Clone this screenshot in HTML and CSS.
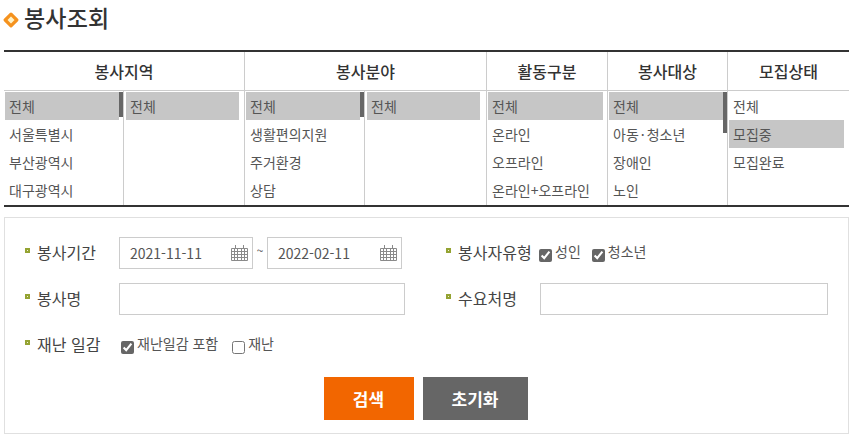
FILE: index.html
```html
<!DOCTYPE html>
<html lang="ko">
<head>
<meta charset="utf-8">
<title>봉사조회</title>
<link rel="stylesheet" href="styles.css">
</head>
<body>
<h1 class="title">
  <svg class="title-icon" width="16" height="16" viewBox="0 0 16 16"><path d="M8 2.2 13.8 8 8 13.8 2.2 8Z" fill="#fff3c8" stroke="#f5921e" stroke-width="3.2" stroke-linejoin="round"/></svg>
  <span>봉사조회</span>
</h1>

<section class="filters">
  <div class="col col-1">
    <div class="col-head">봉사지역</div>
    <div class="col-body">
      <ul class="list list-half has-scroll">
        <li class="on">전체</li><li>서울특별시</li><li>부산광역시</li><li>대구광역시</li>
        <li class="thumb thumb-short" aria-hidden="true"></li>
      </ul>
      <ul class="list list-half last"><li class="on">전체</li></ul>
    </div>
  </div>
  <div class="col col-2">
    <div class="col-head">봉사분야</div>
    <div class="col-body">
      <ul class="list list-half has-scroll">
        <li class="on">전체</li><li>생활편의지원</li><li>주거환경</li><li>상담</li>
        <li class="thumb thumb-short" aria-hidden="true"></li>
      </ul>
      <ul class="list list-half last"><li class="on">전체</li></ul>
    </div>
  </div>
  <div class="col col-3">
    <div class="col-head">활동구분</div>
    <div class="col-body">
      <ul class="list full"><li class="on">전체</li><li>온라인</li><li>오프라인</li><li>온라인+오프라인</li></ul>
    </div>
  </div>
  <div class="col col-4">
    <div class="col-head">봉사대상</div>
    <div class="col-body">
      <ul class="list full has-scroll">
        <li class="on">전체</li><li>아동<span class="dot">·</span>청소년</li><li>장애인</li><li>노인</li>
        <li class="thumb thumb-long" aria-hidden="true"></li>
      </ul>
    </div>
  </div>
  <div class="col col-5">
    <div class="col-head">모집상태</div>
    <div class="col-body">
      <ul class="list full"><li>전체</li><li class="on">모집중</li><li>모집완료</li></ul>
    </div>
  </div>
</section>

<form class="search">
  <div class="grid">
    <div class="field">
      <span class="label">봉사기간</span>
      <div class="dates">
        <div class="date">
          <input class="input date-input" type="text" value="2021-11-11">
          <svg class="cal" width="17" height="16" viewBox="0 0 17 16"><path d="M.5 3.5h16v12H.5zM.5 6.5h16M.5 9.5h16M.5 12.5h16M3.5 3.5v12M6.5 3.5v12M10.5 3.5v12M13.5 3.5v12M4.5 0v3M12.5 0v3" fill="none" stroke="#8a8a8a"/></svg>
        </div>
        <span class="tilde">~</span>
        <div class="date date-wide">
          <input class="input date-input" type="text" value="2022-02-11">
          <svg class="cal" width="17" height="16" viewBox="0 0 17 16"><path d="M.5 3.5h16v12H.5zM.5 6.5h16M.5 9.5h16M.5 12.5h16M3.5 3.5v12M6.5 3.5v12M10.5 3.5v12M13.5 3.5v12M4.5 0v3M12.5 0v3" fill="none" stroke="#8a8a8a"/></svg>
        </div>
      </div>
    </div>
    <div class="field field-right">
      <span class="label label-auto">봉사자유형</span>
      <label class="check"><input type="checkbox" checked><span>성인</span></label>
      <label class="check"><input type="checkbox" checked><span>청소년</span></label>
    </div>
    <div class="field">
      <span class="label">봉사명</span>
      <input class="input text-left" type="text">
    </div>
    <div class="field field-right">
      <span class="label">수요처명</span>
      <input class="input text-right" type="text">
    </div>
    <div class="field">
      <span class="label">재난 일감</span>
      <div class="checks">
        <label class="check"><input type="checkbox" checked><span>재난일감 포함</span></label>
        <label class="check"><input type="checkbox"><span>재난</span></label>
      </div>
    </div>
  </div>
  <div class="buttons">
    <button class="btn btn-search" type="button">검색</button>
    <button class="btn btn-reset" type="button">초기화</button>
  </div>
</form>
</body>
</html>
```

FILE: styles.css
```css
*, *::before { box-sizing: border-box; }
html, body { margin: 0; padding: 0; }
body {
  width: 854px;
  height: 437px;
  overflow: hidden;
  background: #fff;
  padding: 0 5px 0 4px;
  font-family: "Noto Sans CJK KR", "Liberation Sans", sans-serif;
  color: #444;
}

.title {
  display: flex;
  align-items: center;
  height: 50px;
  margin: 0;
  padding-bottom: 16px;
  gap: 5px;
  font-size: 23px;
  font-weight: 500;
  color: #333;
  letter-spacing: .2px;
}
.title-icon { flex: none; margin: 6px 0 0 -1px; }

.filters {
  display: grid;
  grid-template-columns: 241px 242px 121px 120px 121px;
  height: 157px;
  border-top: 2px solid #333;
  border-bottom: 2px solid #333;
}
.col { display: flex; flex-direction: column; border-right: 1px solid #ccc; min-width: 0; }
.col-5 { border-right: 0; }
.col-head {
  height: 39px;
  flex: none;
  border-bottom: 1px solid #ccc;
  font-size: 16px;
  font-weight: 500;
  line-height: 38px;
  text-align: center;
  color: #333;
}
.col-body { display: flex; flex: 1; min-height: 0; }

.list {
  position: relative;
  list-style: none;
  margin: 0;
  padding: 1px 0 0 1px;
  overflow: hidden;
  font-size: 14px;
  color: #555;
}
.list li {
  height: 28px;
  line-height: 28px;
  padding-left: 4px;
  white-space: nowrap;
}
.list .on { background: #c6c6c6; color: #555; }
.dot { margin: 0 2px; }
.list-half { width: 120px; flex: none; border-right: 1px solid #ccc; }
.list-half.last { width: 119px; border-right: 0; }
.list-half.last .on { margin-left: 1px; margin-right: 4px; }
.has-scroll li:not(.thumb) { margin-right: 4px; }
.list.full { flex: 1; }
.col-3 .list.full { padding-right: 4px; }
.col-5 .list.full { padding-right: 5px; }

.list .thumb {
  position: absolute;
  top: 1px;
  right: 0;
  width: 4px;
  padding: 0;
  background: #666;
}
.list .thumb-short { height: 25px; }
.list .thumb-long { height: 41px; }

.search {
  margin-top: 10px;
  width: 845px;
  height: 217px;
  border: 1px solid #e0e0e0;
  padding: 19px 22px 0 20px;
}
.grid {
  display: grid;
  grid-template-columns: 421px 1fr;
  row-gap: 14px;
}
.field { display: flex; align-items: flex-start; height: 32px; font-size: 14px; }
.label {
  position: relative;
  flex: none;
  width: 94px;
  padding-left: 12px;
  font-size: 16px;
  line-height: 30px;
  color: #444;
  white-space: nowrap;
}
.label::before {
  content: "";
  position: absolute;
  left: 0;
  top: 11px;
  width: 5px;
  height: 5px;
  background: #f4f4d8;
  border: 2px solid #94a332;
}
.label-auto { width: 93px; }

.input {
  height: 32px;
  border: 1px solid #ccc;
  background: #fff;
  font-family: inherit;
  font-size: 14px;
  color: #555;
  outline: 0;
  display: block;
}
.text-left { width: 286px; }
.text-right { width: 288px; }

.dates { display: flex; align-items: flex-start; }
.date { position: relative; width: 134px; }
.date-wide { width: 135px; }
.date-input { width: 100%; padding: 0 0 0 10px; }
.cal { position: absolute; right: 5px; top: 8px; }
.tilde { width: 14px; text-align: center; font-size: 12px; line-height: 26px; color: #555; }

.check { display: inline-flex; align-items: flex-start; line-height: 28px; font-size: 14px; color: #555; white-space: nowrap; }
.check input { width: 13px; height: 13px; margin: 12px 3px 0 0; accent-color: #666; flex: none; }
.field-right .check { margin-right: 11px; }
.checks { display: flex; gap: 14px; padding-left: 2px; }

.buttons { display: flex; justify-content: center; gap: 9px; margin-top: 16px; }
.btn {
  height: 43px;
  border: 0;
  padding: 0;
  font-family: inherit;
  font-size: 17px;
  font-weight: 700;
  color: #fff;
}
.btn-search { width: 90px; background: #f26600; }
.btn-reset { width: 105px; background: #666; }
```
